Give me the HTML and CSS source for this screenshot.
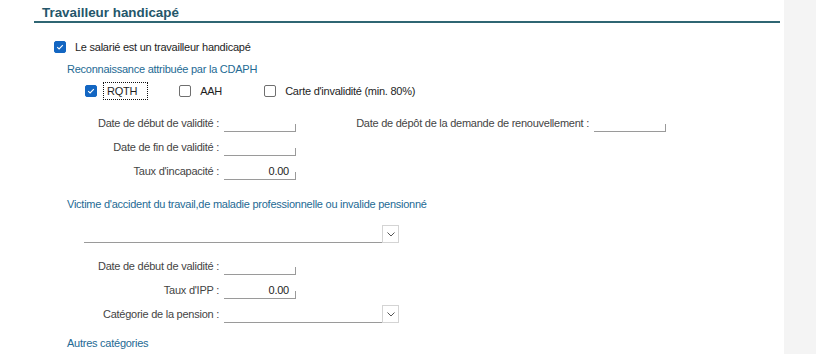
FILE: index.html
```html
<!DOCTYPE html>
<html lang="fr">

<head>
    <meta charset="UTF-8">
    <title>Travailleur handicapé</title>
    <link rel="stylesheet" href="styles.css">
</head>

<body>
    <div class="page">
        <div class="main">

            <!-- Section header -->
            <h2 class="section-title">Travailleur handicapé</h2>

            <div class="check-row">
                <span class="box checked">
                    <svg viewBox="0 0 12 12" width="12" height="12"><path d="M3.2 6.2 L5.1 8 L8.8 4.2" fill="none" stroke="#fff" stroke-width="1.1"/></svg>
                </span>
                <span class="check-text">Le salarié est un travailleur handicapé</span>
            </div>

            <p class="sub-title">Reconnaissance attribuée par la CDAPH</p>

            <div class="options">
                <div class="option">
                    <span class="box checked">
                        <svg viewBox="0 0 12 12" width="12" height="12"><path d="M3.2 6.2 L5.1 8 L8.8 4.2" fill="none" stroke="#fff" stroke-width="1.1"/></svg>
                    </span>
                    <span class="check-text focus">RQTH</span>
                </div>
                <div class="option opt-aah">
                    <span class="box"></span>
                    <span class="check-text">AAH</span>
                </div>
                <div class="option">
                    <span class="box"></span>
                    <span class="check-text">Carte d'invalidité (min. 80%)</span>
                </div>
            </div>

            <!-- Dates CDAPH -->
            <div class="fields">
                <div class="field-row">
                    <span class="label">Date de début de validité :</span>
                    <span class="input"></span>
                    <span class="label label-wide">Date de dépôt de la demande de renouvellement :</span>
                    <span class="input"></span>
                </div>
                <div class="field-row">
                    <span class="label">Date de fin de validité :</span>
                    <span class="input"></span>
                </div>
                <div class="field-row">
                    <span class="label">Taux d'incapacité :</span>
                    <span class="input number">0.00</span>
                </div>
            </div>

            <p class="sub-title victim">Victime d'accident du travail,de maladie professionnelle ou invalide pensionné</p>

            <div class="combo combo-wide">
                <span class="combo-field"></span>
                <span class="combo-btn">
                    <svg viewBox="0 0 8 5" width="8" height="5"><path d="M0.5 0.5 L4 4 L7.5 0.5" fill="none" stroke="#555" stroke-width="1"/></svg>
                </span>
            </div>

            <div class="fields fields-victim">
                <div class="field-row">
                    <span class="label">Date de début de validité :</span>
                    <span class="input"></span>
                </div>
                <div class="field-row">
                    <span class="label">Taux d'IPP :</span>
                    <span class="input number">0.00</span>
                </div>
                <div class="field-row">
                    <span class="label">Catégorie de la pension :</span>
                    <div class="combo">
                        <span class="combo-field combo-short"></span>
                        <span class="combo-btn">
                            <svg viewBox="0 0 8 5" width="8" height="5"><path d="M0.5 0.5 L4 4 L7.5 0.5" fill="none" stroke="#555" stroke-width="1"/></svg>
                        </span>
                    </div>
                </div>
            </div>

            <p class="sub-title others">Autres catégories</p>
        </div>

        <div class="aside"></div>
    </div>
</body>

</html>
```

FILE: styles.css
```css
/* Basic Reset */
* {
    margin: 0;
    padding: 0;
    box-sizing: border-box;
}

body {
    font-family: "Liberation Sans", Arial, sans-serif;
    font-size: 11px;
    letter-spacing: -0.25px;
    color: #3a3a3a;
    background-color: #ffffff;
}

.page {
    display: flex;
    height: 354px;
    overflow: hidden;
}

.main {
    width: 784px;
    padding-top: 5px;
}

.aside {
    flex: 1;
    background-color: #f4f4f4;
}

/* Header */
.section-title {
    margin-left: 34px;
    padding-left: 8px;
    font-size: 13.4px;
    font-weight: bold;
    letter-spacing: 0;
    color: #24566a;
    line-height: 16px;
    border-bottom: 2px solid #2f6673;
    margin-right: 4px;
}

/* Checkboxes */
.check-row {
    display: flex;
    align-items: center;
    margin-left: 54px;
    margin-top: 17px;
    height: 13px;
}

.box {
    width: 12px;
    height: 12px;
    border: 1px solid #6f6f6f;
    border-radius: 2px;
    background-color: #fff;
    display: inline-flex;
    flex-shrink: 0;
}

.box.checked {
    background-color: #1366c2;
    border-color: #1366c2;
    position: relative;
}

.box.checked svg {
    position: absolute;
    left: -1px;
    top: -1px;
}

.check-text {
    margin-left: 9px;
    color: #1e1e1e;
}

.sub-title {
    margin-left: 67px;
    color: #246a94;
    margin-top: 10px;
    line-height: 13px;
}

.options {
    display: flex;
    align-items: center;
    margin-left: 85px;
    margin-top: 6px;
    height: 17px;
}

.option {
    display: flex;
    align-items: center;
}

.option .check-text {
    margin-left: 9px;
}

.check-text.focus {
    margin-left: 6px;
    border: 1px dotted #111;
    padding: 1px 10px 1px 3px;
    line-height: 14px;
}

.opt-aah {
    margin-left: 31px;
    width: 85px;
}

/* Fields */
.fields {
    margin-top: 10px;
}

.field-row {
    display: flex;
    align-items: flex-end;
    height: 24px;
    padding-bottom: 1px;
}

.label {
    width: 224px;
    text-align: right;
    padding-right: 5px;
    padding-bottom: 3px;
    color: #444;
}

.label-wide {
    width: 298px;
}

.input {
    width: 72px;
    height: 16px;
    border-bottom: 1px solid #9a9a9a;
    position: relative;
    text-align: right;
    padding-right: 7px;
    color: #1e1e1e;
    line-height: 14px;
}

.input::after {
    content: "";
    position: absolute;
    right: 0;
    bottom: 0;
    width: 1px;
    height: 7px;
    background-color: #9a9a9a;
}

.sub-title.victim {
    margin-top: 17px;
}

/* Combo boxes */
.combo {
    display: flex;
    align-items: flex-end;
}

.combo-wide {
    margin-left: 84px;
    margin-top: 14px;
}

.combo-field {
    width: 298px;
    height: 18px;
    border-bottom: 1px solid #9a9a9a;
}

.combo-short {
    width: 158px;
}

.combo-btn {
    width: 17px;
    height: 18px;
    border: 1px solid #d4d4d4;
    display: flex;
    align-items: center;
    justify-content: center;
    background-color: #fff;
}

.fields-victim {
    margin-top: 9px;
}

.sub-title.others {
    margin-top: 13px;
}
```
